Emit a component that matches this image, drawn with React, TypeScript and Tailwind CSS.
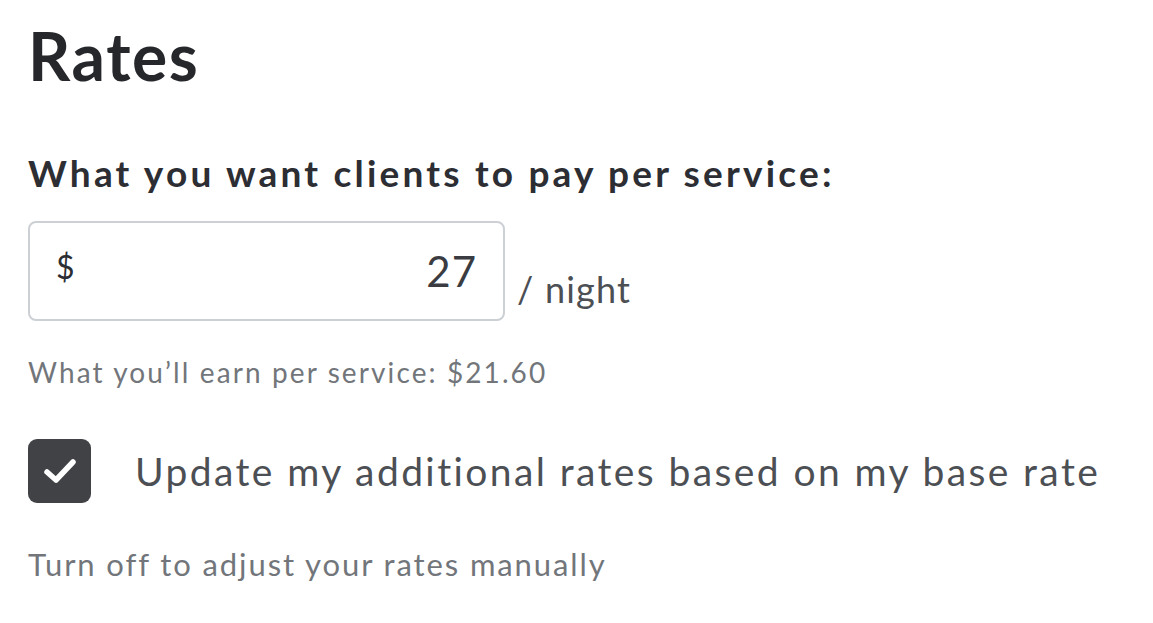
import { useState } from 'react';

export default function App() {
  const [checked, setChecked] = useState(true);

  return (
    <div className="min-h-screen bg-white pl-[28px] pt-[12px] font-['Lato',sans-serif] text-[#25272b]">
      <h1 className="text-[66px] font-bold leading-[88px] tracking-[1.6px]">Rates</h1>

      <div className="mt-[51px] text-[37px] font-bold leading-[44px] tracking-[3.2px] text-[#2c2e33]">
        What you want clients to pay per service:
      </div>

      <div className="mt-[26px] flex items-end gap-[12px]">
        <div className="flex h-[100px] w-[477px] items-center justify-between rounded-[8px] border-2 border-[#ccd0d5] pl-[26px] pr-[26px]">
          <span className="-mt-[8px] text-[32px] text-[#2c2e33]">$</span>
          <span className="text-[42px] tracking-[1px] text-[#3a3c41]">27</span>
        </div>
        <span className="mb-[5px] text-[36px] tracking-[1.2px] text-[#4c4f54]">/ night</span>
      </div>

      <div className="mt-[33px] text-[28px] leading-[36px] tracking-[2.1px] text-[#72767b]">
        What you&rsquo;ll earn per service: $21.60
      </div>

      <label className="mt-[49px] flex cursor-pointer items-center gap-[44px]">
        <button
          type="button"
          onClick={() => setChecked(!checked)}
          className={`flex h-[64px] w-[63px] shrink-0 items-center justify-center rounded-[9px] ${
            checked ? 'bg-[#404246]' : 'border-2 border-[#ccd0d5] bg-white'
          }`}
        >
          {checked && (
            <svg width="34" height="28" viewBox="0 0 34 28" fill="none">
              <path d="M4 15 L13 23 L30 5" stroke="white" strokeWidth="5.5" strokeLinecap="round" strokeLinejoin="round" />
            </svg>
          )}
        </button>
        <span className="whitespace-nowrap text-[39px] tracking-[2.4px] text-[#4c4f54]">
          Update my additional rates based on my base rate
        </span>
      </label>

      <div className="mt-[41px] text-[31px] leading-[40px] tracking-[1.9px] text-[#72767b]">
        Turn off to adjust your rates manually
      </div>
    </div>
  );
}
